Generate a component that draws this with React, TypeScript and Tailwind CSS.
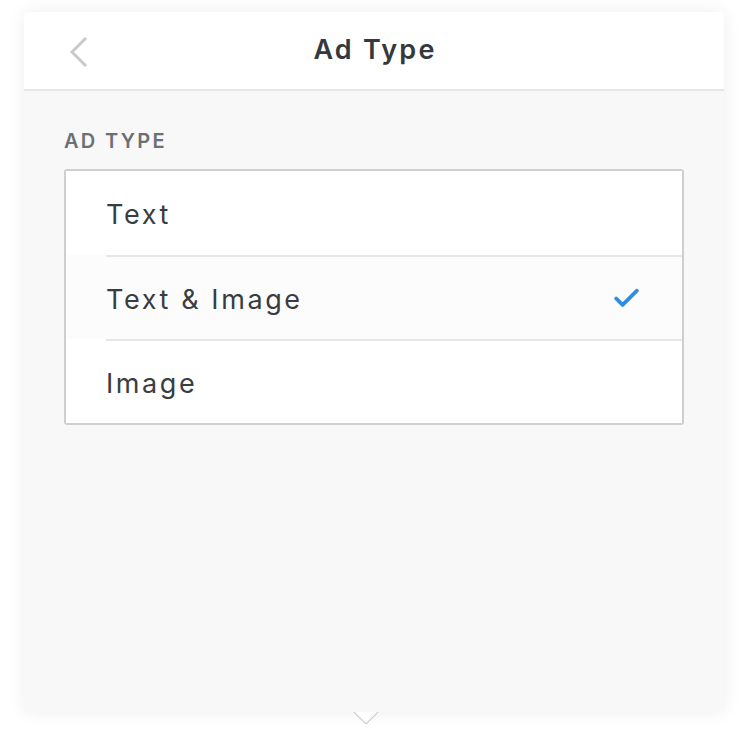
import { Check } from 'lucide-react';

const OPTIONS = ['Text', 'Text & Image', 'Image'];
const SELECTED = 'Text & Image';

export default function App() {
  return (
    <div
      className="h-[734px] w-[754px] bg-white pt-3 pl-6"
      style={{ fontFamily: 'Inter, "Liberation Sans", sans-serif' }}
    >
      <div className="relative flex h-[700px] w-[700px] flex-col rounded-t-[4px] bg-[#f8f8f8] shadow-[0_0_18px_rgba(0,0,0,0.07)]">
        {/* Header */}
        <div className="relative flex h-[79px] shrink-0 items-center justify-center rounded-t-[4px] border-b-2 border-[#e6e6e6] bg-white">
          <button className="absolute left-[44px] top-[24px] text-[#c8cacc]">
            <svg width="22" height="32" viewBox="0 0 22 32" fill="none">
              <path d="M18 2 L4 16 L18 30" stroke="currentColor" strokeWidth="3" />
            </svg>
          </button>
          <h1 className="pl-[2px] text-[27px] font-semibold tracking-[2.2px] text-[#35393c]">Ad Type</h1>
        </div>

        {/* Body */}
        <div className="px-10 pt-[37px]">
          <p className="mb-[15px] text-[20px] font-semibold leading-[26px] tracking-[2.3px] text-[#6c7074]">
            AD TYPE
          </p>
          <ul className="w-[620px] overflow-hidden rounded-[3px] border-2 border-[#cdcfd1] bg-white">
            {OPTIONS.map((o, i) => (
              <li
                key={o}
                className={`flex h-[84px] items-center pl-[40px] ${o === SELECTED ? 'bg-[#fcfcfc]' : 'bg-white'}`}
              >
                <div
                  className={`flex h-full flex-1 items-center pr-[40px] ${i > 0 ? 'border-t-2 border-[#e6e6e6]' : ''}`}
                >
                  <span className="flex-1 pt-[4px] text-[27px] tracking-[2.6px] text-[#3a3d40]">{o}</span>
                  {o === SELECTED && <Check className="h-[31px] w-[31px] text-[#2d8ee0]" strokeWidth={3} />}
                </div>
              </li>
            ))}
          </ul>
        </div>

        {/* Popover arrow */}
        <div className="absolute top-full left-[329px] h-[12px] w-[26px] overflow-hidden">
          <div className="mx-auto -mt-[9px] h-[18px] w-[18px] rotate-45 border-r border-b border-[#c4c4c4] bg-white" />
        </div>
      </div>
    </div>
  );
}
